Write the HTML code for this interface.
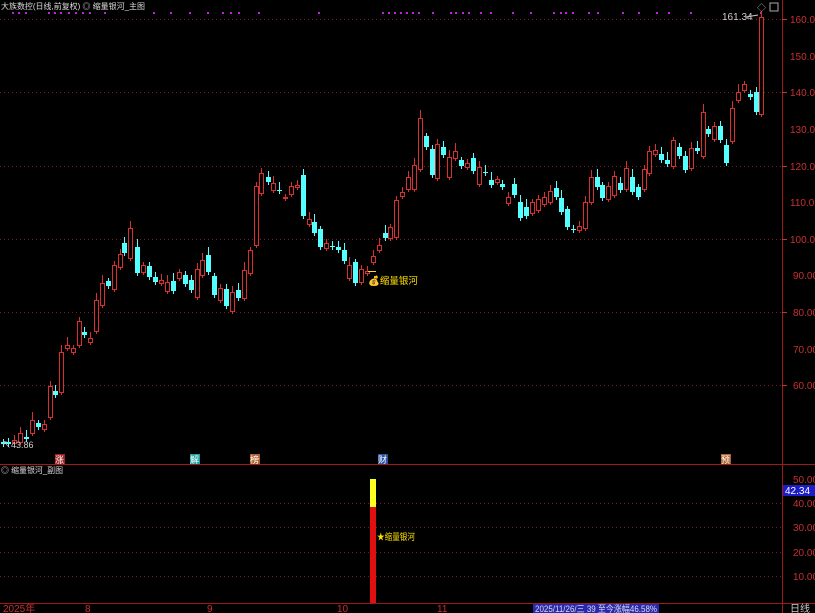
<!DOCTYPE html>
<html><head><meta charset="utf-8"><style>
body{margin:0;background:#000;width:815px;height:613px;overflow:hidden;font-family:"Liberation Sans","Noto Sans CJK SC",sans-serif;}
svg{display:block}
text{font-family:"Liberation Sans","Noto Sans CJK SC",sans-serif;}
</style></head><body>
<svg id="s" width="815" height="613" xmlns="http://www.w3.org/2000/svg">
<rect width="815" height="613" fill="#000"/>
<g stroke="#7a1a1a" stroke-dasharray="1,3" stroke-width="1">
<line x1="0" y1="19.5" x2="782" y2="19.5"/><line x1="0" y1="92.5" x2="782" y2="92.5"/><line x1="0" y1="166.5" x2="782" y2="166.5"/><line x1="0" y1="239.5" x2="782" y2="239.5"/><line x1="0" y1="312.5" x2="782" y2="312.5"/><line x1="0" y1="385.5" x2="782" y2="385.5"/>
<line x1="0" y1="503.5" x2="782" y2="503.5"/><line x1="0" y1="527.5" x2="782" y2="527.5"/><line x1="0" y1="552.5" x2="782" y2="552.5"/><line x1="0" y1="576.5" x2="782" y2="576.5"/>
</g>
<line x1="782.5" y1="0" x2="782.5" y2="613" stroke="#a01818"/>
<line x1="0" y1="464.5" x2="815" y2="464.5" stroke="#a01818"/>
<line x1="0" y1="603.5" x2="815" y2="603.5" stroke="#a01818"/>
<g fill="#c83030" font-size="10">
<text x="790" y="23">160.0</text><text x="790" y="60">150.0</text><text x="790" y="96">140.0</text><text x="790" y="133">130.0</text><text x="790" y="170">120.0</text><text x="790" y="206">110.0</text><text x="790" y="243">100.0</text><text x="793" y="279">90.00</text><text x="793" y="316">80.00</text><text x="793" y="353">70.00</text><text x="793" y="389">60.00</text>
<text x="793" y="483">50.00</text><text x="793" y="507">40.00</text><text x="793" y="531">30.00</text><text x="793" y="556">20.00</text><text x="793" y="580">10.00</text>
</g>
<g stroke="#c83030"><line x1="782" y1="19.5" x2="787" y2="19.5"/><line x1="782" y1="92.5" x2="787" y2="92.5"/><line x1="782" y1="166.5" x2="787" y2="166.5"/><line x1="782" y1="239.5" x2="787" y2="239.5"/><line x1="782" y1="312.5" x2="787" y2="312.5"/><line x1="782" y1="385.5" x2="787" y2="385.5"/></g>
<rect x="783" y="485" width="32" height="11" fill="#1c1cc8"/><text x="785" y="494" fill="#fff" font-size="10">42.34</text>
<text x="1" y="9" fill="#ddd" font-size="8" textLength="144" lengthAdjust="spacingAndGlyphs">大族数控(日线,前复权) ◎ 缩量银河_主图</text>
<text x="1" y="473" fill="#ddd" font-size="8" textLength="62" lengthAdjust="spacingAndGlyphs">◎ 缩量银河_副图</text>
<g id="dots" fill="#c020e0"></g>
<g id="c"></g>
<text x="722" y="20" fill="#ccc" font-size="10">161.34</text>
<line x1="746" y1="17" x2="758" y2="15" stroke="#ccc"/>
<text x="757" y="11" fill="#aaa" font-size="9">◇</text><rect x="770" y="3" width="8" height="8" fill="none" stroke="#aaa"/>
<text x="2" y="448" fill="#ccc" font-size="9">↖43.86</text>
<text x="368" y="284" fill="#ffe000" font-size="9.5">💰缩量银河</text>
<line x1="368" y1="271.5" x2="376" y2="271.5" stroke="#ffe000"/>
<rect x="55" y="454" width="10" height="10" fill="#a02020"/><text x="55" y="463" fill="#fff" font-size="9">涨</text>
<rect x="190" y="454" width="10" height="10" fill="#20a0a0"/><text x="190" y="463" fill="#fff" font-size="9">解</text>
<rect x="250" y="454" width="10" height="10" fill="#b06030"/><text x="250" y="463" fill="#fff" font-size="9">榜</text>
<rect x="378" y="454" width="10" height="10" fill="#3050a0"/><text x="378" y="463" fill="#fff" font-size="9">财</text>
<rect x="721" y="454" width="10" height="10" fill="#b06030"/><text x="721" y="463" fill="#fff" font-size="9">预</text>
<rect x="370" y="479" width="6" height="28" fill="#ffff20"/><rect x="370" y="507" width="6" height="96" fill="#e01010"/>
<text x="377" y="540" fill="#ffe000" font-size="9" textLength="38" lengthAdjust="spacingAndGlyphs">★缩量银河</text>
<g fill="#c83030" font-size="10"><text x="3" y="612">2025年</text><text x="85" y="612">8</text><text x="207" y="612">9</text><text x="337" y="612">10</text><text x="437" y="612">11</text></g>
<rect x="533" y="604" width="126" height="9" fill="#2828b0"/><text x="535" y="612" fill="#ddd" font-size="9" textLength="122" lengthAdjust="spacingAndGlyphs">2025/11/26/三 39 至今涨幅46.58%</text>
<text x="790" y="612" fill="#ccc" font-size="10">日线</text>
</svg>
<script>
var d=[[3,442,444,'c'],[8,442,444,'c'],[14,440,443,'r'],[20,433,442,'r'],[26,437,439,'c'],[32,420,433,'r'],[38,423,427,'c'],[44,424,429,'r'],[50,386,417,'r'],[55,391,395,'c'],[61,352,392,'r'],[67,345,348,'r'],[73,348,352,'r'],[79,321,345,'r'],[84,332,335,'c'],[90,338,342,'r'],[96,300,331,'r'],[102,283,305,'r'],[108,281,286,'c'],[114,265,289,'r'],[120,254,267,'r'],[124,243,253,'c'],[130,228,258,'r'],[137,247,273,'c'],[143,265,272,'r'],[149,266,277,'c'],[155,277,282,'c'],[161,280,283,'r'],[167,282,291,'r'],[173,281,291,'c'],[179,272,278,'r'],[185,275,284,'c'],[191,280,290,'c'],[197,269,297,'r'],[202,260,275,'r'],[208,255,272,'c'],[214,276,295,'c'],[220,288,300,'r'],[226,289,306,'c'],[232,292,311,'r'],[238,290,298,'c'],[244,270,298,'r'],[250,250,273,'r'],[256,186,245,'r'],[261,173,193,'r'],[268,177,182,'c'],[273,183,190,'r'],[279,190,191,'c'],[285,197,198,'r'],[291,186,194,'r'],[297,185,187,'r'],[303,175,216,'c'],[309,219,224,'r'],[314,222,233,'c'],[320,229,247,'c'],[326,243,248,'r'],[332,246,247,'c'],[338,247,250,'c'],[344,250,261,'c'],[349,265,278,'r'],[355,262,283,'c'],[361,269,282,'r'],[367,271,273,'r'],[373,256,262,'r'],[379,245,250,'r'],[385,233,238,'c'],[390,227,238,'r'],[396,200,237,'r'],[402,192,196,'r'],[408,177,189,'r'],[414,165,189,'r'],[420,118,169,'r'],[426,136,147,'c'],[432,149,175,'c'],[437,144,178,'r'],[443,147,155,'c'],[449,157,177,'r'],[455,151,158,'r'],[461,160,166,'c'],[467,163,167,'r'],[473,158,171,'c'],[479,167,184,'r'],[485,172,173,'c'],[491,180,185,'c'],[497,179,182,'r'],[502,184,187,'c'],[508,197,203,'r'],[514,184,195,'c'],[520,202,218,'c'],[526,207,216,'c'],[532,202,213,'r'],[538,199,210,'r'],[544,197,204,'r'],[550,191,202,'r'],[556,188,197,'c'],[561,198,212,'c'],[567,209,227,'c'],[573,229,230,'c'],[579,226,230,'r'],[585,202,228,'r'],[591,177,202,'r'],[597,177,187,'c'],[602,185,198,'c'],[608,186,199,'r'],[614,176,195,'r'],[620,183,190,'c'],[626,168,189,'r'],[632,177,192,'c'],[638,187,197,'c'],[644,169,189,'r'],[649,151,173,'r'],[655,150,154,'r'],[661,154,160,'c'],[667,160,164,'c'],[673,140,166,'r'],[679,147,156,'c'],[685,156,170,'c'],[691,148,168,'r'],[697,148,151,'c'],[703,112,156,'r'],[708,129,134,'c'],[714,126,139,'r'],[720,126,140,'c'],[726,145,163,'c'],[732,108,141,'r'],[738,92,100,'r'],[744,84,90,'r'],[750,94,97,'c'],[756,92,112,'c'],[761,17,114,'r']];
var h='';
d.forEach(function(e,i){var x=e[0],t=e[1],b=e[2],r=e[3]=='r',col=r?'#d83030':'#54ffff';var wt=t-3-(i*7%6),wb=b+3+(i*5%5);
h+='<line x1="'+(x+.5)+'" y1="'+wt+'" x2="'+(x+.5)+'" y2="'+wb+'" stroke="'+col+'"/>';
if(r)h+='<rect x="'+(x-1.5)+'" y="'+(t+.5)+'" width="4" height="'+Math.max(1,b-t)+'" fill="#000" stroke="'+col+'"/>';
else h+='<rect x="'+(x-2)+'" y="'+t+'" width="5" height="'+Math.max(1,b-t)+'" fill="'+col+'"/>';});
document.getElementById('c').innerHTML=h;
var dx=[12,18,25,48,54,60,68,75,82,89,104,153,170,189,207,222,230,238,258,318,382,388,394,400,406,412,418,432,450,455,462,468,480,490,512,530,553,560,565,572,588,597,622,638,656,668,690,760];var g='';
dx.forEach(function(x){g+='<rect x="'+x+'" y="12" width="2" height="2"/>';});
document.getElementById('dots').innerHTML=g;
</script>
</body></html>
